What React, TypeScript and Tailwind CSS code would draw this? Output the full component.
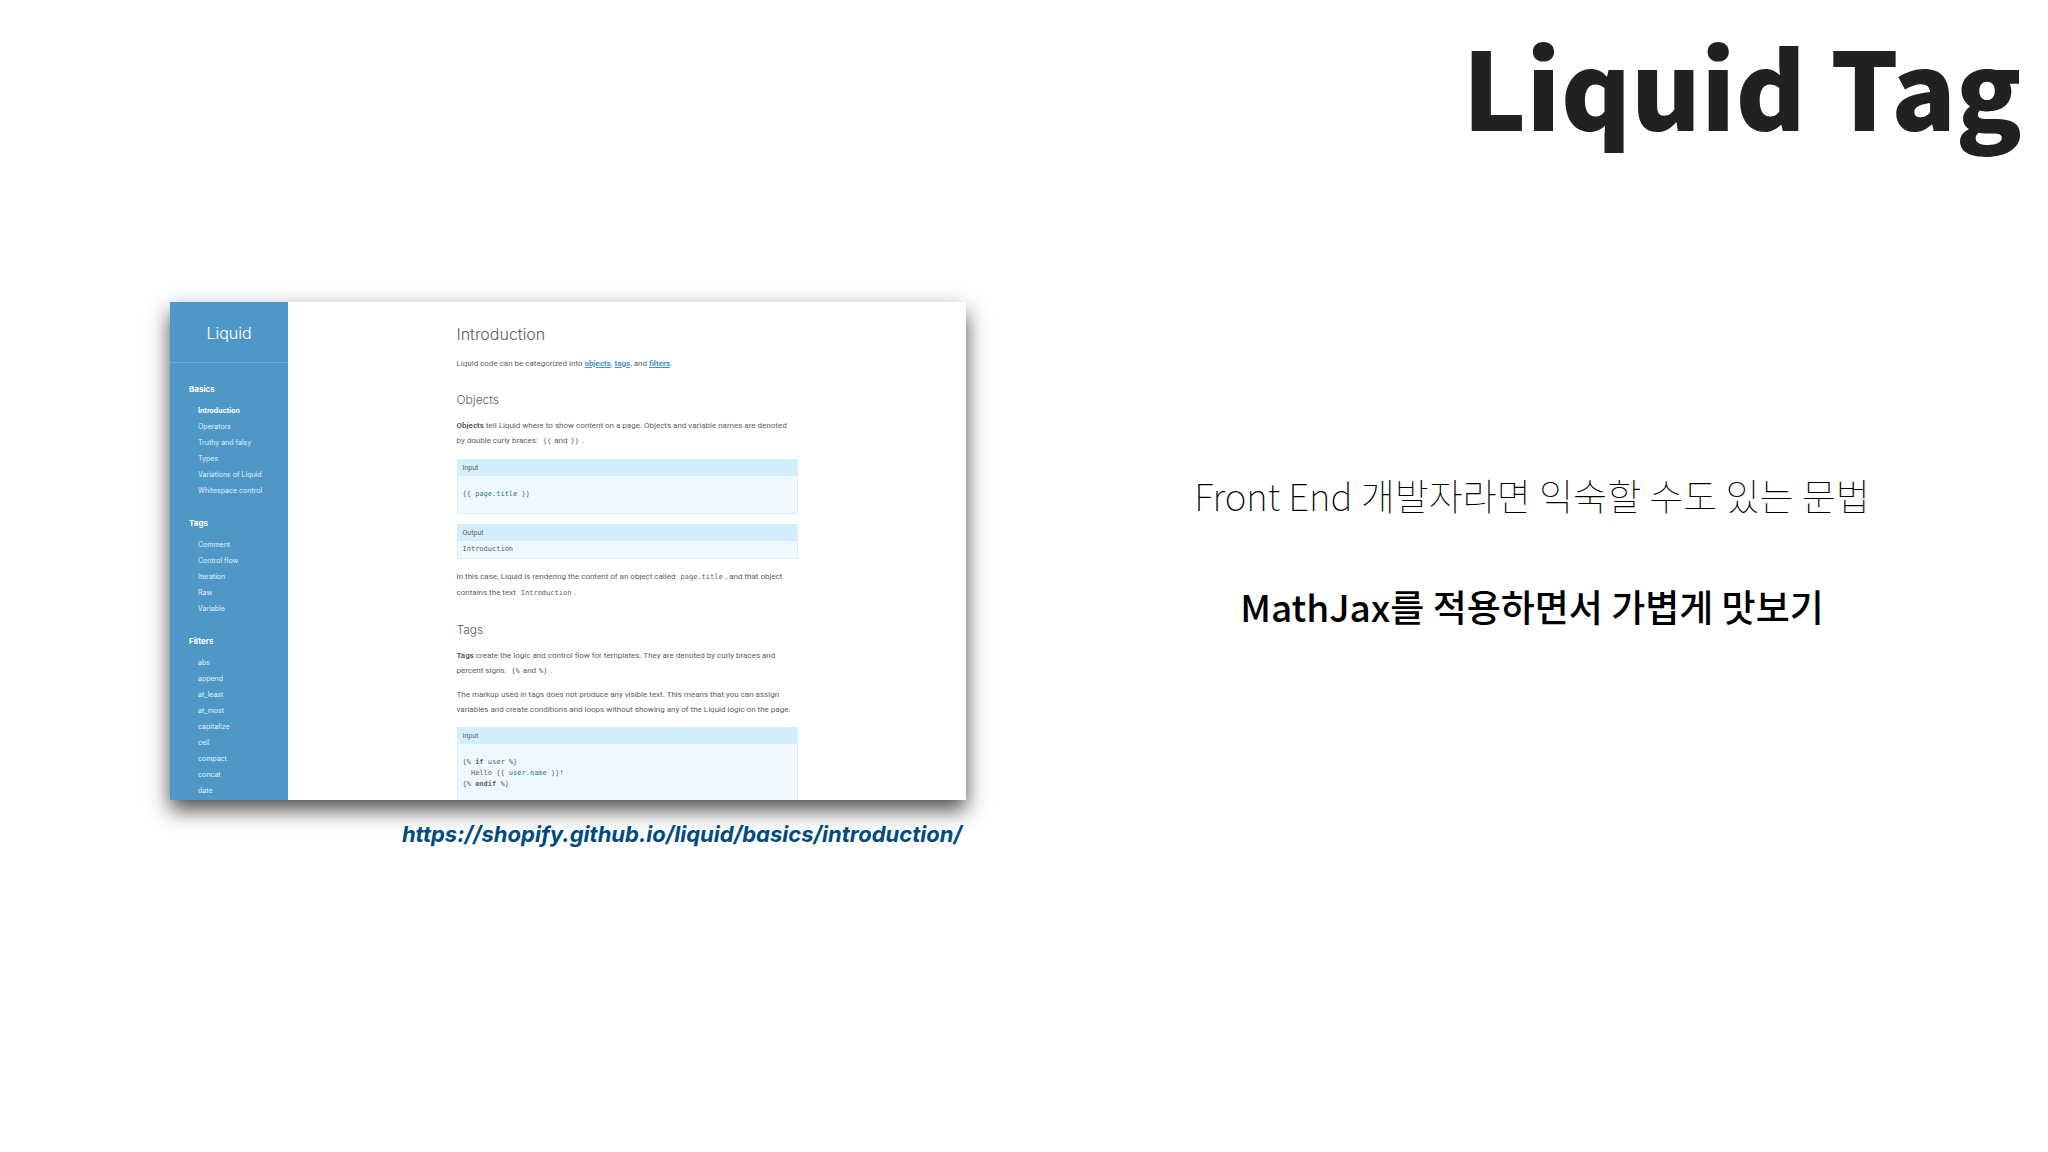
import type { ReactNode } from "react";

const sections = [
  {
    title: "Basics",
    items: [
      "Introduction",
      "Operators",
      "Truthy and falsy",
      "Types",
      "Variations of Liquid",
      "Whitespace control",
    ],
  },
  {
    title: "Tags",
    items: ["Comment", "Control flow", "Iteration", "Raw", "Variable"],
  },
  {
    title: "Filters",
    items: [
      "abs",
      "append",
      "at_least",
      "at_most",
      "capitalize",
      "ceil",
      "compact",
      "concat",
      "date",
    ],
  },
];

function Sidebar() {
  return (
    <nav className="w-[118px] shrink-0 bg-[#4f97c6] text-white">
      <div className="flex h-[61px] items-center justify-center border-b border-[#68a8d2] pt-0.5 text-base font-light">
        Liquid
      </div>
      <div className="flex flex-col gap-4 pt-[18px] pl-[19px]">
        {sections.map((section) => (
          <div key={section.title}>
            <h3 className="mb-1.5 text-[8px] leading-4 font-bold">
              {section.title}
            </h3>
            <ul className="pl-[9px] text-[7px] leading-4">
              {section.items.map((item) => (
                <li key={item}>
                  <a
                    href="#"
                    className={
                      item === "Introduction" ? "font-bold" : "text-[#e3f0f8]"
                    }
                  >
                    {item}
                  </a>
                </li>
              ))}
            </ul>
          </div>
        ))}
      </div>
    </nav>
  );
}

function Code({ children }: { children: ReactNode }) {
  return (
    <code className="px-[3px] font-['DejaVu_Sans_Mono',monospace] text-[7px]">
      {children}
    </code>
  );
}

function DocLink({ children }: { children: ReactNode }) {
  return (
    <a href="#" className="font-bold text-[#4594ca] underline">
      {children}
    </a>
  );
}

function Example({
  label,
  compact,
  children,
}: {
  label: string;
  compact?: boolean;
  children: ReactNode;
}) {
  return (
    <div className="border border-[#d5eef9] bg-[#f0f8ff] text-[7px]">
      <p className="bg-[#d3effd] px-[5px] leading-4">{label}</p>
      <pre
        className={`px-[5px] font-['DejaVu_Sans_Mono',monospace] leading-[11px] ${
          compact ? "py-[3px]" : "py-[13px]"
        }`}
      >
        {children}
      </pre>
    </div>
  );
}

function Heading({ children }: { children: ReactNode }) {
  return (
    <h2 className="mt-[21px] font-['Inter',sans-serif] text-[12px] leading-4 font-light">
      {children}
    </h2>
  );
}

function Docs() {
  return (
    <article className="mx-auto w-[341px] pt-5 font-['Roboto',sans-serif] text-[8px] leading-[15px] whitespace-nowrap text-[#5c6063]">
      <h1 className="font-['Inter',sans-serif] text-base leading-6 font-light">
        Introduction
      </h1>
      <p className="mt-2.5">
        Liquid code can be categorized into <DocLink>objects</DocLink>,{" "}
        <DocLink>tags</DocLink>, and <DocLink>filters</DocLink>.
      </p>

      <Heading>Objects</Heading>
      <p className="mt-2.5">
        <b>Objects</b> tell Liquid where to show content on a page. Objects and
        variable names are denoted
        <br />
        by double curly braces: <Code>{"{{"}</Code>and<Code>{"}}"}</Code>.
      </p>
      <div className="mt-2.5 flex flex-col gap-2.5">
        <Example label="Input">
          {"{{ "}
          <span className="text-[#1f7a74]">page.title</span>
          {" }}"}
        </Example>
        <Example label="Output" compact>
          Introduction
        </Example>
      </div>
      <p className="mt-2.5">
        In this case, Liquid is rendering the content of an object called{" "}
        <Code>page.title</Code>, and that object
        <br />
        contains the text <Code>Introduction</Code>.
      </p>

      <Heading>Tags</Heading>
      <p className="mt-2.5">
        <b>Tags</b> create the logic and control flow for templates. They are
        denoted by curly braces and
        <br />
        percent signs: <Code>{"{%"}</Code>and<Code>{"%}"}</Code>.
      </p>
      <p className="mt-2">
        The markup used in tags does not produce any visible text. This means
        that you can assign
        <br />
        variables and create conditions and loops without showing any of the
        Liquid logic on the page.
      </p>
      <div className="mt-2.5">
        <Example label="Input">
          {"{% "}
          <b>if</b> <span className="text-[#1f7a74]">user</span>
          {" %}\n  Hello {{ "}
          <span className="text-[#1f7a74]">user.name</span>
          {" }}!\n{% "}
          <b>endif</b>
          {" %}"}
        </Example>
      </div>
    </article>
  );
}

function App() {
  return (
    <div className="min-h-screen bg-white font-['Noto_Sans_CJK_KR',sans-serif]">
      <header className="pt-[13px] pr-[26px] text-right">
        <h1 className="text-[107px] leading-[144px] font-black text-[#212121]">
          Liquid Tag
        </h1>
      </header>

      <main className="mt-[145px] grid grid-cols-2">
        <figure className="pr-[58px] pl-[170px]">
          <div className="flex h-[498px] overflow-hidden bg-white font-['Inter',sans-serif] shadow-[0_10px_20px_rgba(0,0,0,0.7)]">
            <Sidebar />
            <Docs />
          </div>
          <figcaption className="mt-5 pr-1 text-right font-['Inter',sans-serif] text-[22px] leading-7 font-bold text-[#004b7d] italic">
            <a href="https://shopify.github.io/liquid/basics/introduction/">
              https://shopify.github.io/liquid/basics/introduction/
            </a>
          </figcaption>
        </figure>

        <section className="flex flex-col gap-14 pt-[166px] pr-2 text-center text-[37px] leading-[55px] text-black">
          <p className="font-thin">Front End 개발자라면 익숙할 수도 있는 문법</p>
          <p className="font-medium">MathJax를 적용하면서 가볍게 맛보기</p>
        </section>
      </main>
    </div>
  );
}

export default App;
